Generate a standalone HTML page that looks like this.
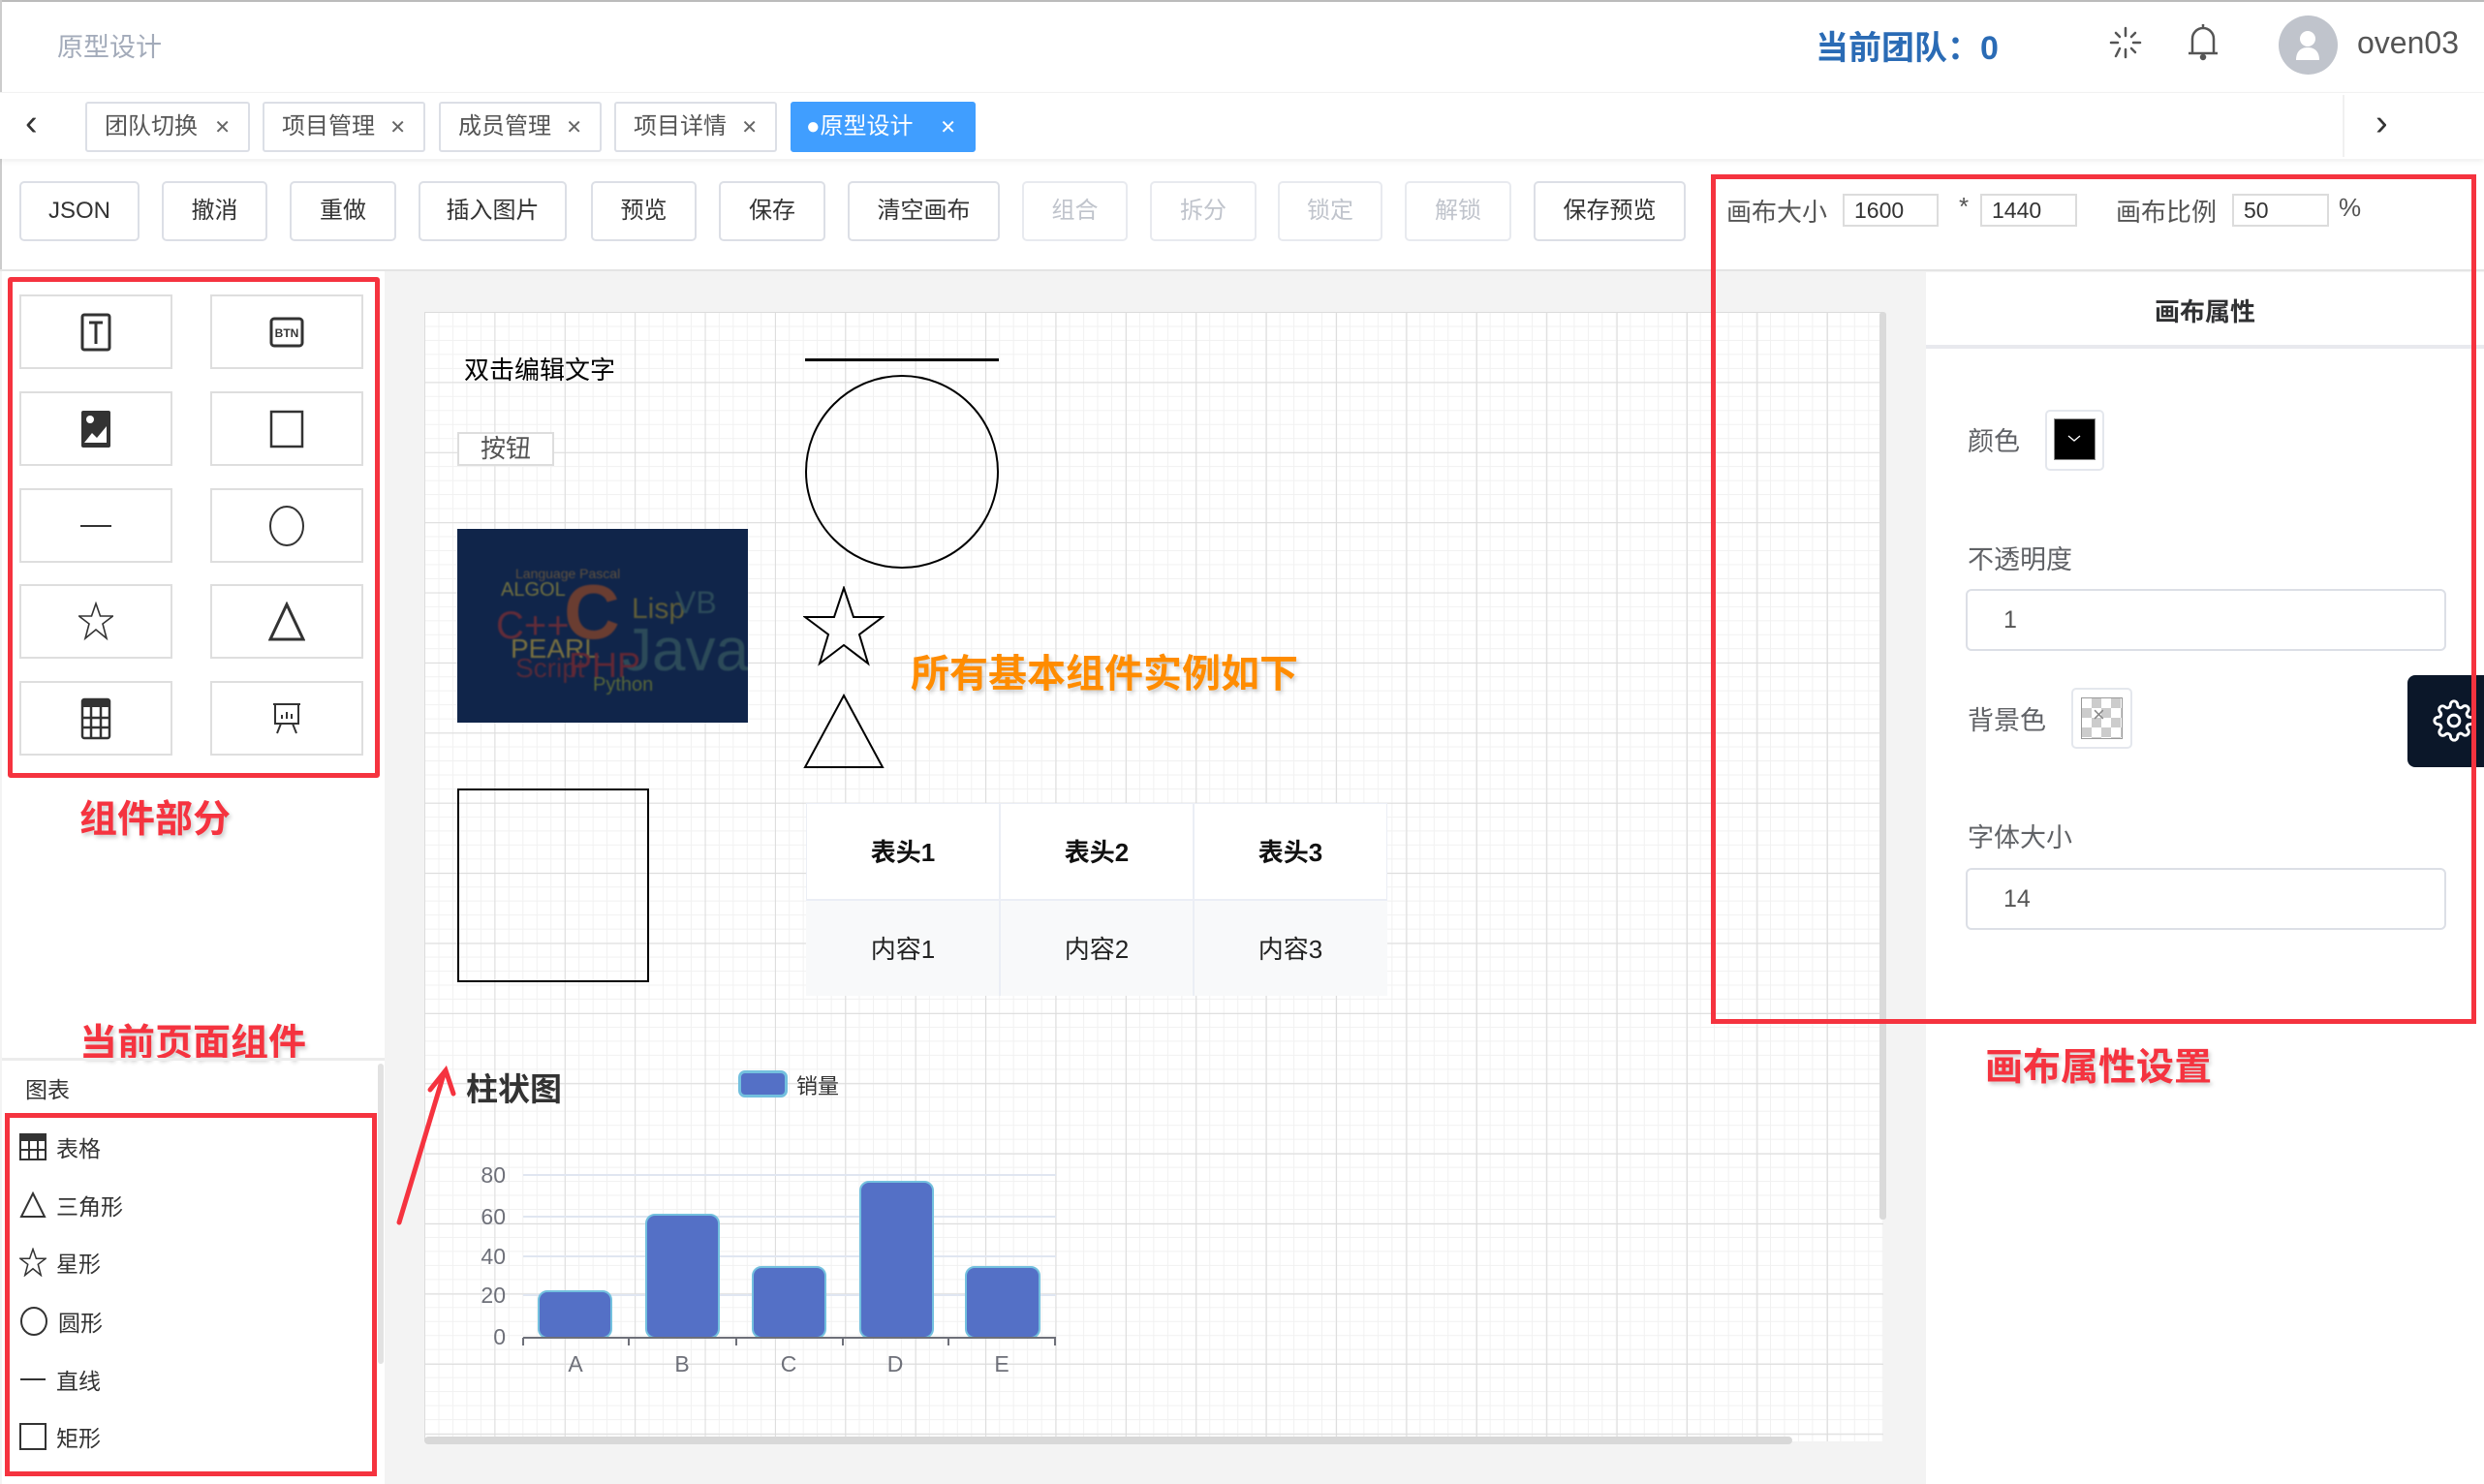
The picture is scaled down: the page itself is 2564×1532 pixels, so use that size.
<!DOCTYPE html>
<html><head><meta charset="utf-8"><style>
*{margin:0;padding:0;box-sizing:border-box}
body{width:2564px;height:1532px;position:relative;overflow:hidden;background:#fff;font-family:"Liberation Sans","Noto Sans CJK SC",sans-serif;color:#333}
.a{position:absolute}
.tab{position:absolute;top:105px;height:52px;border:2px solid #dcdfe6;border-radius:3px;font-size:24px;color:#555;line-height:48px;padding-left:18px;background:#fff}
.tab i{font-style:normal;font-size:20px;position:absolute;right:18px;top:1px;color:#666}
.btn{position:absolute;top:187px;height:62px;border:2px solid #dcdfe6;border-radius:5px;font-size:24px;color:#333;line-height:58px;text-align:center;background:#fff}
.dis{color:#c0c4cc;border-color:#e8eaef}
.tile{position:absolute;width:158px;height:77px;border:2px solid #dedede;background:#fff;display:flex;align-items:center;justify-content:center}
.li{position:absolute;left:20px;font-size:23px;color:#333;display:flex;align-items:center;height:36px}
.li svg{margin-right:10px}
.red{color:#f5333f;font-weight:bold;text-shadow:2px 3px 4px rgba(0,0,0,.2)}
.inp{position:absolute;height:34px;border:2px solid #dcdcdc;font-size:23px;color:#333;line-height:30px;padding-left:10px;top:200px}
.lab{position:absolute;font-size:27px;color:#606266}
.rin{position:absolute;left:2029px;width:496px;height:64px;border:2px solid #dcdfe6;border-radius:6px;font-size:25px;color:#555;line-height:60px;padding-left:37px}
</style></head><body>
<div class="a" style="left:0;top:0;width:2564px;height:2px;background:#bbb"></div>
<div class="a" style="left:0;top:0;width:2px;height:1532px;background:#ccc"></div>
<div class="a" style="left:59px;top:27px;font-size:27px;color:#a3abba">原型设计</div>
<div class="a" style="left:1874px;top:22px;font-size:34px;color:#2a6bb5;font-weight:bold">当前团队：0</div>
<svg class="a" style="left:2176px;top:26px" width="36" height="36" viewBox="0 0 36 36" stroke="#555" stroke-width="2.5" stroke-linecap="round"><line x1="18" y1="3" x2="18" y2="11"/><line x1="18" y1="25" x2="18" y2="33"/><line x1="3" y1="18" x2="10" y2="18"/><line x1="26" y1="18" x2="33" y2="18"/><line x1="8" y1="8" x2="12" y2="12"/><line x1="24" y1="24" x2="28" y2="28"/><line x1="28" y1="8" x2="24" y2="12"/><line x1="12" y1="24" x2="8" y2="32"/></svg>
<svg class="a" style="left:2256px;top:22px" width="36" height="42" viewBox="0 0 36 42" fill="none" stroke="#555" stroke-width="2.5"><path d="M18 3v3M7 32V18a11 11 0 0 1 22 0v14M3 33h30"/><circle cx="18" cy="37" r="2" fill="#555"/></svg>
<div class="a" style="left:2352px;top:16px;width:61px;height:61px;border-radius:50%;background:#c0c4cc"></div>
<svg class="a" style="left:2367px;top:30px" width="30" height="34" viewBox="0 0 30 34" fill="#fff"><circle cx="15" cy="10" r="8"/><path d="M3 32c0-9 5-13 12-13s12 4 12 13z"/></svg>
<div class="a" style="left:2433px;top:26px;font-size:32px;color:#555">oven03</div>
<div class="a" style="left:0;top:95px;width:2564px;height:69px;background:#fff;box-shadow:0 3px 5px rgba(0,0,0,.06);border-top:1px solid #f2f2f2"></div>
<div class="a" style="left:26px;top:106px;font-size:38px;color:#333">&lsaquo;</div>
<div class="a" style="left:2418px;top:98px;width:2px;height:64px;background:#f0f0f0"></div>
<div class="a" style="left:2452px;top:106px;font-size:38px;color:#333">&rsaquo;</div>
<div class="tab" style="left:88px;width:170px">团队切换<i>✕</i></div>
<div class="tab" style="left:271px;width:168px">项目管理<i>✕</i></div>
<div class="tab" style="left:453px;width:168px">成员管理<i>✕</i></div>
<div class="tab" style="left:634px;width:168px">项目详情<i>✕</i></div>
<div class="tab" style="left:816px;width:191px;background:#409eff;border-color:#409eff;color:#fff;padding-left:14px">●原型设计<i style="color:#fff">✕</i></div>
<div class="btn" style="left:20px;width:124px">JSON</div>
<div class="btn" style="left:167px;width:109px">撤消</div>
<div class="btn" style="left:299px;width:110px">重做</div>
<div class="btn" style="left:432px;width:153px">插入图片</div>
<div class="btn" style="left:610px;width:109px">预览</div>
<div class="btn" style="left:742px;width:110px">保存</div>
<div class="btn" style="left:875px;width:157px">清空画布</div>
<div class="btn dis" style="left:1055px;width:109px">组合</div>
<div class="btn dis" style="left:1187px;width:110px">拆分</div>
<div class="btn dis" style="left:1319px;width:108px">锁定</div>
<div class="btn dis" style="left:1450px;width:110px">解锁</div>
<div class="btn" style="left:1583px;width:157px">保存预览</div>
<div class="a" style="left:1782px;top:199px;font-size:26px;color:#555">画布大小</div>
<div class="inp" style="left:1902px;width:99px">1600</div>
<div class="a" style="left:2022px;top:198px;font-size:26px;color:#555">*</div>
<div class="inp" style="left:2044px;width:100px">1440</div>
<div class="a" style="left:2184px;top:199px;font-size:26px;color:#555">画布比例</div>
<div class="inp" style="left:2304px;width:100px">50</div>
<div class="a" style="left:2414px;top:199px;font-size:26px;color:#555">%</div>
<div class="a" style="left:0;top:278px;width:2564px;height:1254px;background:#f3f3f3;border-top:2px solid #e4e4e4"></div>
<div class="a" style="left:2px;top:280px;width:395px;height:1252px;background:#fff"></div>
<div class="a" style="left:8px;top:286px;width:384px;height:517px;border:5px solid #f5333f;border-radius:3px"></div>
<div class="tile" style="left:20px;top:304px"><svg width="32" height="40" viewBox="0 0 32 40" fill="none" stroke="#333" stroke-width="3"><rect x="2" y="2" width="28" height="36" rx="2"/><path d="M9 10h14M16 10v22"/></svg></div>
<div class="tile" style="left:217px;top:304px"><svg width="36" height="32" viewBox="0 0 36 32"><rect x="2" y="2" width="32" height="28" rx="3" fill="none" stroke="#333" stroke-width="3"/><text x="18" y="21" font-size="12" text-anchor="middle" font-family="Liberation Sans" font-weight="bold" fill="#333">BTN</text></svg></div>
<div class="tile" style="left:20px;top:404px"><svg width="32" height="40" viewBox="0 0 32 40"><rect x="1" y="1" width="30" height="38" rx="2" fill="#333"/><circle cx="10" cy="10" r="4" fill="#fff"/><path d="M4 34l8-10 5 5 10-12v17z" fill="#fff"/></svg></div>
<div class="tile" style="left:217px;top:404px"><svg width="36" height="40"><rect x="2" y="2" width="32" height="36" fill="none" stroke="#333" stroke-width="2.5"/></svg></div>
<div class="tile" style="left:20px;top:504px"><svg width="36" height="4"><line x1="2" y1="2" x2="34" y2="2" stroke="#333" stroke-width="2"/></svg></div>
<div class="tile" style="left:217px;top:504px"><svg width="40" height="44"><ellipse cx="20" cy="22" rx="17" ry="20" fill="none" stroke="#333" stroke-width="2"/></svg></div>
<div class="tile" style="left:20px;top:603px"><svg width="36" height="42" viewBox="0 0 36 42"><path d="M18 2l4.5 13h13l-10.5 8 4 15-11-9-11 9 4-15L.5 15h13z" fill="none" stroke="#333" stroke-width="1.6"/></svg></div>
<div class="tile" style="left:217px;top:603px"><svg width="38" height="42"><path d="M19 3L36 39H2z" fill="none" stroke="#333" stroke-width="3"/></svg></div>
<div class="tile" style="left:20px;top:703px"><svg width="32" height="44" viewBox="0 0 32 44"><rect x="2" y="2" width="28" height="40" rx="2" fill="none" stroke="#333" stroke-width="2.5"/><rect x="2" y="2" width="28" height="8" fill="#333"/><path d="M2 21h28M2 31h28M11 10v32M21 10v32" stroke="#333" stroke-width="2.5"/></svg></div>
<div class="tile" style="left:217px;top:703px"><svg width="30" height="34" viewBox="0 0 30 34" fill="none" stroke="#333" stroke-width="2"><path d="M1 2h28M3 2v20h24V2M9 22l-4 10M21 22l4 10M10 17v-4M15 17v-7M20 17v-5"/></svg></div>
<div class="a red" style="left:82px;top:815px;font-size:39px">组件部分</div>
<div class="a red" style="left:82px;top:1046px;font-size:39px">当前页面组件</div>
<div class="a" style="left:2px;top:1092px;width:395px;height:3px;background:#ececec"></div>
<div class="a" style="left:390px;top:1098px;width:6px;height:310px;background:#e2e2e2;border-radius:3px"></div>
<div class="a" style="left:26px;top:1106px;font-size:23px;color:#333">图表</div>
<div class="a" style="left:5px;top:1149px;width:384px;height:375px;border:5px solid #f5333f"></div>
<div class="li" style="top:1166px"><svg width="28" height="28" viewBox="0 0 28 28"><rect x="1" y="1" width="26" height="26" fill="none" stroke="#333" stroke-width="2"/><rect x="1" y="1" width="26" height="7" fill="#333"/><path d="M1 17h26M10 8v19M19 8v19" stroke="#333" stroke-width="2"/></svg>表格</div>
<div class="li" style="top:1226px"><svg width="28" height="28"><path d="M14 2L26 26H2z" fill="none" stroke="#333" stroke-width="2"/></svg>三角形</div>
<div class="li" style="top:1285px"><svg width="28" height="30" viewBox="0 0 36 40"><path d="M18 2l4.5 13h13l-10.5 8 4 15-11-9-11 9 4-15L.5 15h13z" fill="none" stroke="#333" stroke-width="2"/></svg>星形</div>
<div class="li" style="top:1346px"><svg width="30" height="32"><ellipse cx="15" cy="16" rx="13" ry="14" fill="none" stroke="#333" stroke-width="2"/></svg>圆形</div>
<div class="li" style="top:1406px"><svg width="28" height="4"><line x1="1" y1="2" x2="27" y2="2" stroke="#333" stroke-width="2"/></svg>直线</div>
<div class="li" style="top:1465px"><svg width="28" height="28"><rect x="1" y="1" width="26" height="26" fill="none" stroke="#333" stroke-width="2"/></svg>矩形</div>
<div class="a" style="left:438px;top:322px;width:1506px;height:1166px;background-color:#fff;background-image:linear-gradient(#dcdcdc 1px,transparent 1px),linear-gradient(90deg,#dcdcdc 1px,transparent 1px),linear-gradient(#f1f1f1 1px,transparent 1px),linear-gradient(90deg,#f1f1f1 1px,transparent 1px);background-size:72.4px 72.4px,72.4px 72.4px,14.48px 14.48px,14.48px 14.48px"></div>
<div class="a" style="left:1940px;top:322px;width:7px;height:937px;background:#dadada;border-radius:3px"></div>
<div class="a" style="left:438px;top:1483px;width:1412px;height:8px;background:#d8d8d8;border-radius:4px"></div>
<div class="a" style="left:479px;top:362px;font-size:26px;color:#000">双击编辑文字</div>
<div class="a" style="left:472px;top:446px;width:100px;height:35px;border:2px solid #ddd;background:#fff;font-size:26px;color:#555;text-align:center;line-height:31px">按钮</div>
<div class="a" style="left:472px;top:546px;width:300px;height:200px;background:#10254a;overflow:hidden">
 <div style="position:absolute;inset:0;opacity:.65;filter:blur(0.8px)">
 <div class="a" style="left:110px;top:40px;font-size:80px;color:#9a4a25;font-weight:bold">C</div>
 <div class="a" style="left:170px;top:90px;font-size:62px;color:#3b5f62">Java</div>
 <div class="a" style="left:40px;top:78px;font-size:40px;color:#8e3030">C++</div>
 <div class="a" style="left:55px;top:108px;font-size:28px;color:#b39a3a">PEARL</div>
 <div class="a" style="left:60px;top:128px;font-size:28px;color:#7a2d30">Script</div>
 <div class="a" style="left:115px;top:120px;font-size:36px;color:#8e2a2a">PHP</div>
 <div class="a" style="left:180px;top:66px;font-size:30px;color:#8a7c30">Lisp</div>
 <div class="a" style="left:225px;top:58px;font-size:32px;color:#3b5f62">VB</div>
 <div class="a" style="left:45px;top:52px;font-size:20px;color:#a79a3a">ALGOL</div>
 <div class="a" style="left:140px;top:150px;font-size:20px;color:#7f8a30">Python</div>
 <div class="a" style="left:60px;top:38px;font-size:14px;color:#8a6a3a">Language Pascal</div>
 </div>
</div>
<div class="a" style="left:472px;top:814px;width:198px;height:200px;border:2px solid #000"></div>
<div class="a" style="left:831px;top:370px;width:200px;height:3px;background:#000"></div>
<svg class="a" style="left:829px;top:386px" width="204" height="202"><ellipse cx="102" cy="101" rx="99" ry="99" fill="none" stroke="#000" stroke-width="2"/></svg>
<svg class="a" style="left:829px;top:605px" width="84" height="84" viewBox="0 0 84 84"><path d="M42 2l10 30h30l-24 18 9 30-25-19-25 19 9-30L2 32h30z" fill="none" stroke="#000" stroke-width="2"/></svg>
<svg class="a" style="left:829px;top:716px" width="84" height="78"><path d="M42 2L82 76H2z" fill="none" stroke="#000" stroke-width="2"/></svg>
<div class="a" style="left:940px;top:663px;font-size:40px;color:#ff8c00;font-weight:bold;text-shadow:2px 3px 4px rgba(0,0,0,.18)">所有基本组件实例如下</div>
<div class="a" style="left:832px;top:829px;width:600px;height:199px;border:1px solid #ebeef5;background:#fff"></div>
<div class="a" style="left:832px;top:928px;width:600px;height:100px;background:#f8f9fa;border-top:2px solid #ebeef5"></div>
<div class="a" style="left:1031px;top:829px;width:2px;height:199px;background:#ebeef5"></div>
<div class="a" style="left:1231px;top:829px;width:2px;height:199px;background:#ebeef5"></div>
<div class="a" style="left:832px;top:860px;width:200px;text-align:center;font-size:26px;font-weight:bold;color:#111">表头1</div>
<div class="a" style="left:1032px;top:860px;width:200px;text-align:center;font-size:26px;font-weight:bold;color:#111">表头2</div>
<div class="a" style="left:1232px;top:860px;width:200px;text-align:center;font-size:26px;font-weight:bold;color:#111">表头3</div>
<div class="a" style="left:832px;top:960px;width:200px;text-align:center;font-size:26px;color:#222">内容1</div>
<div class="a" style="left:1032px;top:960px;width:200px;text-align:center;font-size:26px;color:#222">内容2</div>
<div class="a" style="left:1232px;top:960px;width:200px;text-align:center;font-size:26px;color:#222">内容3</div>
<div class="a" style="left:481px;top:1098px;font-size:33px;font-weight:bold;color:#333">柱状图</div>
<div class="a" style="left:762px;top:1105px;width:51px;height:28px;background:#5470c6;border:3px solid #73c0de;border-radius:7px"></div>
<div class="a" style="left:822px;top:1104px;font-size:22px;color:#333">销量</div>
<svg class="a" style="left:470px;top:1190px" width="640" height="230" font-family="Liberation Sans" font-size="23" fill="#6e7079">
 <g stroke="#e0e6f1" stroke-width="2"><line x1="70" y1="23" x2="620" y2="23"/><line x1="70" y1="66" x2="620" y2="66"/><line x1="70" y1="107" x2="620" y2="107"/><line x1="70" y1="147" x2="620" y2="147"/></g>
 <g text-anchor="end"><text x="52" y="31">80</text><text x="52" y="74">60</text><text x="52" y="115">40</text><text x="52" y="155">20</text><text x="52" y="198">0</text></g>
 <g fill="#5470c6" stroke="#73c0de" stroke-width="2">
  <rect x="86" y="143" width="75" height="48" rx="9"/>
  <rect x="197" y="64" width="75" height="127" rx="9"/>
  <rect x="307" y="118" width="75" height="73" rx="9"/>
  <rect x="418" y="30" width="75" height="161" rx="9"/>
  <rect x="527" y="118" width="76" height="73" rx="9"/>
 </g>
 <g stroke="#6e7079" stroke-width="2"><line x1="70" y1="191" x2="620" y2="191"/><line x1="70" y1="191" x2="70" y2="199"/><line x1="179" y1="191" x2="179" y2="199"/><line x1="290" y1="191" x2="290" y2="199"/><line x1="400" y1="191" x2="400" y2="199"/><line x1="509" y1="191" x2="509" y2="199"/><line x1="619" y1="191" x2="619" y2="199"/></g>
 <g text-anchor="middle"><text x="124" y="226">A</text><text x="234" y="226">B</text><text x="344" y="226">C</text><text x="454" y="226">D</text><text x="564" y="226">E</text></g>
</svg>
<svg class="a" style="left:400px;top:1095px" width="75" height="175"><path d="M12 167L58 14M44 30L60 10l8 24" fill="none" stroke="#f5333f" stroke-width="5" stroke-linecap="round"/></svg>
<div class="a" style="left:1988px;top:281px;width:576px;height:1251px;background:#fff"></div>
<div class="a" style="left:1988px;top:302px;width:576px;text-align:center;font-size:26px;font-weight:bold;color:#303133">画布属性</div>
<div class="a" style="left:1988px;top:356px;width:576px;height:4px;background:#e8e9ee"></div>
<div class="lab" style="left:2031px;top:434px">颜色</div>
<div class="a" style="left:2111px;top:423px;width:61px;height:63px;border:2px solid #e4e7ed;border-radius:5px"></div>
<div class="a" style="left:2120px;top:432px;width:43px;height:43px;background:#000;border:1px solid #888"></div>
<svg class="a" style="left:2134px;top:448px" width="14" height="10"><path d="M1 2l6 5 6-5" fill="none" stroke="#fff" stroke-width="1.3"/></svg>
<div class="lab" style="left:2031px;top:556px">不透明度</div>
<div class="rin" style="top:608px">1</div>
<div class="lab" style="left:2031px;top:722px">背景色</div>
<div class="a" style="left:2138px;top:710px;width:63px;height:63px;border:2px solid #e4e7ed;border-radius:5px"></div>
<div class="a" style="left:2148px;top:720px;width:43px;height:43px;border:1px solid #999;background-color:#fff;background-image:linear-gradient(45deg,#ccc 25%,transparent 25%,transparent 75%,#ccc 75%),linear-gradient(45deg,#ccc 25%,transparent 25%,transparent 75%,#ccc 75%);background-size:20px 20px;background-position:0 0,10px 10px"></div>
<div class="a" style="left:2160px;top:725px;font-size:22px;color:#888">×</div>
<div class="lab" style="left:2031px;top:843px">字体大小</div>
<div class="rin" style="top:896px">14</div>
<div class="a" style="left:2485px;top:697px;width:79px;height:95px;background:#0b1729;border-radius:8px 0 0 8px"></div>
<svg class="a" style="left:2511px;top:722px" width="44" height="44" viewBox="0 0 24 24" fill="none" stroke="#fff" stroke-width="1.6"><circle cx="12" cy="12" r="3.2"/><path d="M19.4 15a1.65 1.65 0 0 0 .33 1.820l.06.06a2 2 0 1 1-2.830 2.830l-.06-.06a1.650 1.650 0 0 0-1.820-.33 1.650 1.650 0 0 0-1 1.510V21a2 2 0 1 1-4 0v-.09A1.650 1.650 0 0 0 9 19.4a1.650 1.650 0 0 0-1.820.33l-.06.06a2 2 0 1 1-2.830-2.830l.06-.06A1.650 1.650 0 0 0 4.680 15a1.650 1.650 0 0 0-1.510-1H3a2 2 0 1 1 0-4h.09A1.650 1.650 0 0 0 4.600 9a1.650 1.650 0 0 0-.33-1.820l-.06-.06a2 2 0 1 1 2.830-2.830l.06.06A1.650 1.650 0 0 0 9 4.680a1.650 1.650 0 0 0 1-1.510V3a2 2 0 1 1 4 0v.09a1.650 1.650 0 0 0 1 1.510 1.650 1.650 0 0 0 1.820-.33l.06-.06a2 2 0 1 1 2.830 2.830l-.06.06A1.650 1.650 0 0 0 19.4 9a1.650 1.650 0 0 0 1.510 1H21a2 2 0 1 1 0 4h-.09a1.650 1.650 0 0 0-1.510 1z"/></svg>
<div class="a" style="left:1766px;top:180px;width:790px;height:877px;border:5px solid #f5333f"></div>
<div class="a red" style="left:2049px;top:1071px;font-size:39px">画布属性设置</div>
</body></html>
